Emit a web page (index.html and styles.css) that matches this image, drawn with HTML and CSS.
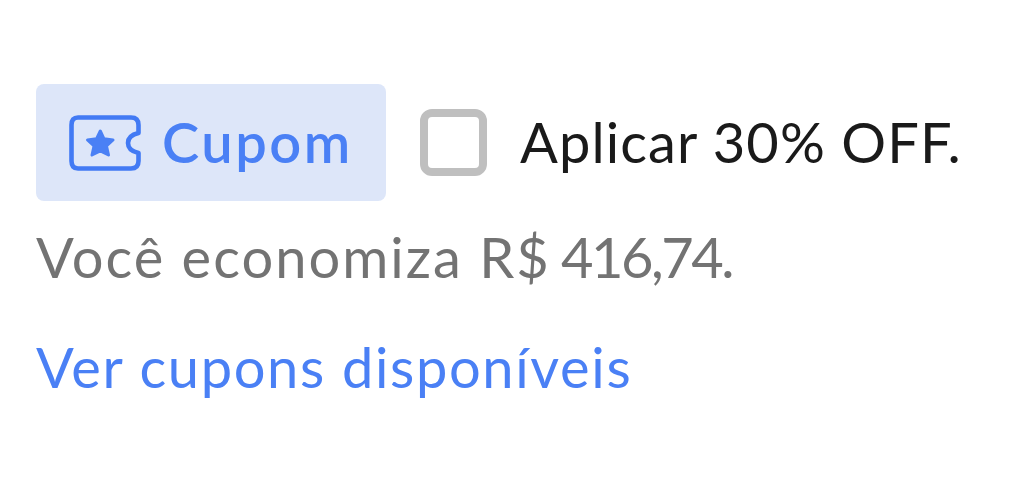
FILE: index.html
```html
<!DOCTYPE html>
<html lang="pt-BR">
  <head>
    <meta charset="UTF-8" />
    <meta name="viewport" content="width=device-width, initial-scale=1.0" />
    <title>Cupom</title>
    <link rel="stylesheet" href="styles.css">
  </head>
  <body>
    <div class="coupon">
      <div class="coupon-row">
        <div class="coupon-badge">
          <svg class="ticket-icon" viewBox="0 0 72 56" width="72" height="56">
            <path d="M9 2.500H62Q69.500 2.500 69.500 10V18C63 19.500 59 23 59 28C59 33 63 36.500 69.500 38V46Q69.500 53.500 62 53.500H9Q2.500 53.500 2.500 46V10Q2.500 2.500 9 2.500Z" fill="none" stroke="#427af4" stroke-width="4.600" stroke-linejoin="round" />
            <path d="M31.300 16L35 23.800L44 25L37.500 31L39.500 40L31.300 36L23 40L25 31L18.500 25L27.500 23.800Z" fill="#4a80f5" stroke="#4a80f5" stroke-width="3" stroke-linejoin="round" />
          </svg>
          <span class="badge-text">Cupom</span>
        </div>
        <label class="coupon-option">
          <input class="coupon-check" type="checkbox" />
          <span class="option-text">Aplicar 30% OFF.</span>
        </label>
      </div>
      <p class="savings">Você economiza R$ <span class="amount">416,74.</span></p>
      <a class="coupon-link" href="#">Ver cupons disponíveis</a>
    </div>
  </body>
</html>
```
FILE: styles.css
```css
* {
  margin: 0;
  padding: 0;
  box-sizing: border-box;
}

body {
  font-family: Lato, sans-serif;
  background-color: #ffffff;
}

.coupon {
  padding: 84px 36px 0;
  font-size: 56px;
  line-height: 70px;
  white-space: nowrap;
}

.coupon-row {
  display: flex;
  align-items: center;
}

.coupon-badge {
  display: flex;
  align-items: center;
  width: 350px;
  height: 117px;
  padding-left: 33px;
  background-color: #dde6f9;
  border-radius: 8px;
}

.ticket-icon {
  margin-right: 21px;
}

.badge-text {
  padding-bottom: 1px;
  color: #4a80f5;
  font-weight: 600;
  letter-spacing: 2.5px;
}

.coupon-option {
  display: flex;
  align-items: center;
  margin-left: 34px;
  color: #1a1a1a;
}

.coupon-check {
  appearance: none;
  width: 67px;
  height: 67px;
  margin-right: 33px;
  border: 8px solid #bfbfbf;
  border-radius: 12px;
}

.option-text {
  padding-bottom: 1px;
  letter-spacing: 1.1px;
}

.savings {
  margin-top: 21px;
  color: #737373;
  letter-spacing: 2px;
}

.amount {
  margin-left: -6px;
  letter-spacing: -2.5px;
}

.coupon-link {
  display: block;
  margin-top: 40px;
  color: #4a80f5;
  letter-spacing: 1.65px;
  text-decoration: none;
}
```
